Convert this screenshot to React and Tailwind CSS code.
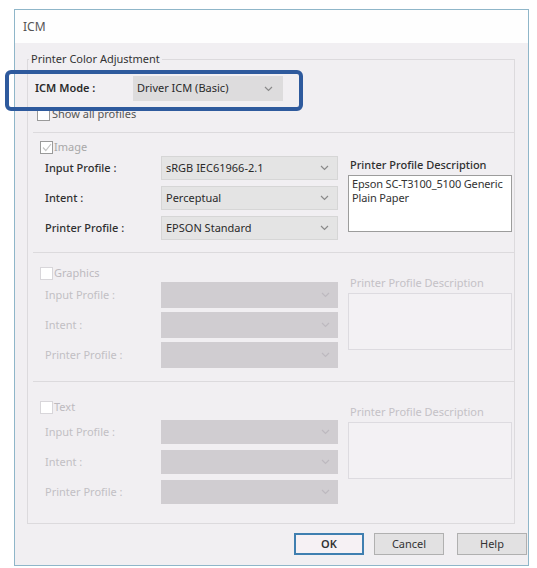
import React from "react";

function Chevron({ disabled }) {
  return (
    <svg width="9" height="6" viewBox="0 0 9 6" className="shrink-0">
      <path d="M1 1 L4.5 4.5 L8 1" fill="none" stroke={disabled ? "#bdb9bf" : "#8a8a8a"} strokeWidth="1.2" />
    </svg>
  );
}

function Select({ value, disabled, hClass }) {
  return (
    <div
      className={
        "flex w-[177px] items-center justify-between pl-[4px] pr-[8px] " +
        hClass +
        (disabled ? " bg-[#d0cdd1]" : " bg-[#e4e4e4] border border-[#d6d6d6]")
      }
    >
      <span className="text-[11px] text-[#2a2a2a]">{value}</span>
      <Chevron disabled={disabled} />
    </div>
  );
}

function Check({ checked, disabled }) {
  return (
    <div
      className={
        "flex h-[13px] w-[13px] items-center justify-center bg-white border " +
        (disabled ? "border-[#d8d6da]" : "border-[#9a9a9a]")
      }
    >
      {checked && (
        <svg width="10" height="9" viewBox="0 0 10 9">
          <path d="M1 4.5 L3.8 7.5 L9 1" fill="none" stroke="#c4c4c4" strokeWidth="1.2" />
        </svg>
      )}
    </div>
  );
}

function Row({ label, value, disabled, hClass }) {
  return (
    <div className="flex items-center">
      <div
        className={
          "w-[128px] pl-[12px] text-[11px] " +
          (disabled ? "text-[#c2bfc4]" : "text-[#303030] font-medium")
        }
      >
        {label}
      </div>
      <Select value={value} disabled={disabled} hClass={hClass} />
    </div>
  );
}

function Section({ title, checked, disabled, rows, hClass, gapClass, cbMt, ddMt, descMt, descText, bottomClass }) {
  return (
    <div className={"ml-[5px] border-t border-[#dcdadd] flex " + bottomClass}>
      <div className="flex flex-col w-[305px]">
        <div className={"flex items-center h-[14px] pl-[7px] gap-[1px] " + cbMt}>
          <Check checked={checked} disabled={disabled} />
          <span className={"text-[11px] " + (disabled ? "text-[#bdbabf]" : "text-[#a8a8a8]")}>{title}</span>
        </div>
        <div className={"flex flex-col " + gapClass + " " + ddMt}>
          {rows.map((r) => (
            <Row key={r[0]} label={r[0]} value={r[1]} disabled={disabled} hClass={hClass} />
          ))}
        </div>
      </div>
      <div className={"ml-[10px] flex flex-col w-[164px] " + descMt}>
        <div className={"h-[14px] leading-[14px] text-[11px] pl-[2px] " + (disabled ? "text-[#c4c1c6]" : "text-[#303030] font-medium")}>
          Printer Profile Description
        </div>
        <div
          className={
            "mt-[3px] h-[57px] px-[3px] pt-[1px] text-[11px] tracking-[-0.15px] leading-[14px] text-[#333] whitespace-nowrap overflow-hidden " +
            (disabled ? "border border-[#dddbe0] bg-[#f3f1f4]" : "border border-[#9c9c9c] bg-white")
          }
        >
          {descText}
        </div>
      </div>
    </div>
  );
}

export default function App() {
  return (
    <div className="relative w-[537px] h-[568px] overflow-hidden bg-white font-['Noto_Sans',sans-serif]">
      <div className="ml-[14px] mt-[9px] flex h-[557px] w-[515px] flex-col border border-[#8fb6c9]">
        <div className="flex h-[33px] items-center bg-[#fefefe] pl-[8px] text-[12px] text-[#555]">ICM</div>
        <div className="flex flex-1 flex-col bg-[#f1eff2]">
          <div className="pl-[12px] pr-[13px] pt-[9px]">
            <fieldset className="h-[472px] border border-[#dcdadd]">
              <legend className="ml-[1px] px-[2px] text-[11px] leading-[14px] text-[#333]">Printer Color Adjustment</legend>
              <div className="mt-[10px] flex h-[25px] items-center">
                <div className="w-[105px] pl-[7px] text-[11px] font-semibold text-[#2a2a2a]">ICM Mode :</div>
                <div className="flex h-[25px] w-[150px] items-center justify-between bg-[#dddcdd] pl-[4px] pr-[10px]">
                  <span className="text-[11px] text-[#2a2a2a]">Driver ICM (Basic)</span>
                  <Chevron />
                </div>
              </div>
              <div className="mt-[6px] flex h-[14px] items-center gap-[2px] pl-[9px]">
                <Check />
                <span className="text-[11px] leading-[14px] text-[#555]">Show all profiles</span>
              </div>
              <div className="mt-[11px]">
                <Section
                  title="Image"
                  checked
                  disabled={false}
                  rows={[["Input Profile :", "sRGB IEC61966-2.1"], ["Intent :", "Perceptual"], ["Printer Profile :", "EPSON Standard"]]}
                  hClass="h-[24px]"
                  gapClass="gap-[6px]"
                  cbMt="mt-[7px]"
                  ddMt="mt-[2px]"
                  descMt="mt-[25px]"
                  descText={<>Epson SC-T3100_5100 Generic<br />Plain Paper</>}
                  bottomClass="pb-[12px]"
                />
                <Section
                  title="Graphics"
                  disabled
                  rows={[["Input Profile :", ""], ["Intent :", ""], ["Printer Profile :", ""]]}
                  hClass="h-[26px]"
                  gapClass="gap-[4px]"
                  cbMt="mt-[13px]"
                  ddMt="mt-[2px]"
                  descMt="mt-[23px]"
                  descText=""
                  bottomClass="pb-[13px]"
                />
                <Section
                  title="Text"
                  disabled
                  rows={[["Input Profile :", ""], ["Intent :", ""], ["Printer Profile :", ""]]}
                  hClass="h-[24px]"
                  gapClass="gap-[6px]"
                  cbMt="mt-[18px]"
                  ddMt="mt-[6px]"
                  descMt="mt-[23px]"
                  descText=""
                  bottomClass="pb-[10px]"
                />
              </div>
            </fieldset>
          </div>
          <div className="mt-[9px] flex justify-end pr-[1px] text-[11px]">
            <div className="flex h-[22px] w-[70px] items-center justify-center border-2 border-[#3f7fb0] bg-[#f6f1f4] font-semibold text-[#333]">OK</div>
            <div className="ml-[10px] flex h-[22px] w-[70px] items-center justify-center border border-[#b0b0b0] bg-[#e2e1e2] text-[#333]">Cancel</div>
            <div className="ml-[13px] flex h-[22px] w-[70px] items-center justify-center border border-[#b0b0b0] bg-[#e2e1e2] text-[#333]">Help</div>
          </div>
        </div>
      </div>
      <div className="absolute left-[5px] top-[70px] h-[41px] w-[298px] rounded-[6px] border-[4px] border-[#2e5a9d]" />
    </div>
  );
}
